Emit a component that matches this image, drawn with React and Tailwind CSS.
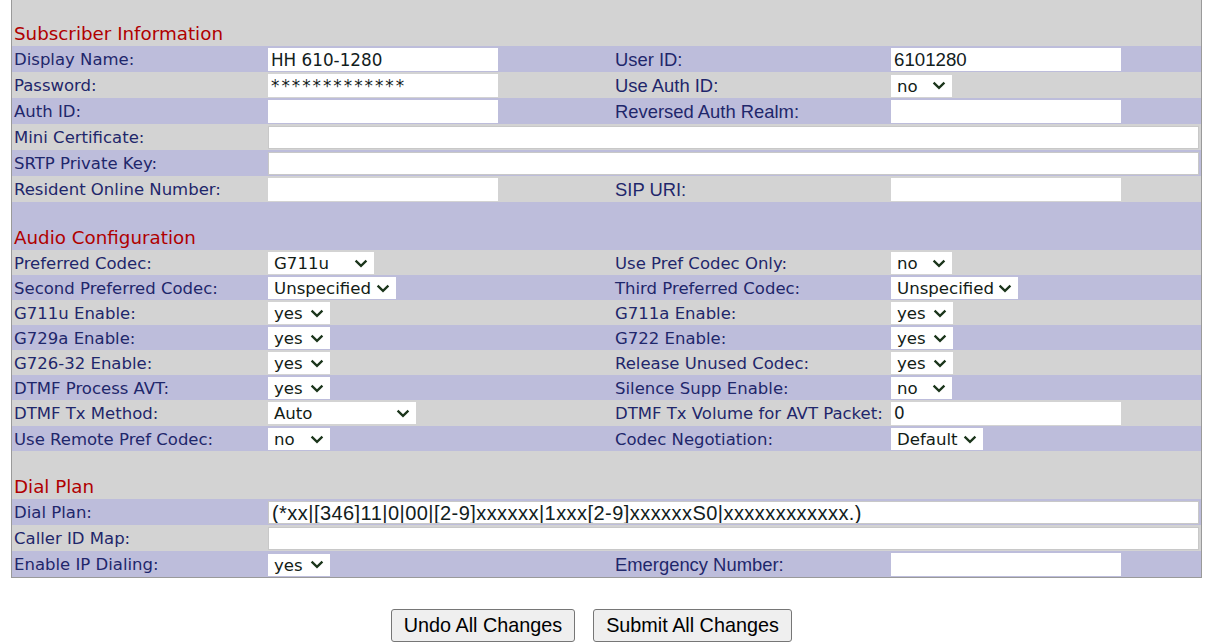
import React from 'react';

const GRAY = 'bg-[#d3d3d3]';
const LAV = 'bg-[#bdbddb]';

const Chevron = () => (
    <svg width="14" height="9" viewBox="0 0 14 9" className="shrink-0">
        <polyline points="1.6,1.6 7,6.8 12.4,1.6" fill="none" stroke="#1b351b" strokeWidth="2.3" />
    </svg>
);

const Select = ({ value, w }) => (
    <div
        className="h-[22px] bg-white flex items-center justify-between pl-[6px] pr-[6px] text-[16.6px] text-[#121c16]"
        style={{ width: w }}
    >
        <span className="leading-none pt-[2px]">{value}</span>
        <Chevron />
    </div>
);

const Input = ({ value = '', arial, full, size, extra = '' }) => (
    <div
        className={
            'h-[23px] bg-white flex items-center pl-[3px] pt-[1px] text-[#12201c] whitespace-nowrap overflow-hidden ' +
            (full ? 'w-[931px] border border-[#c8c8c8] ' : 'w-[230px] ') +
            extra +
            (arial ? " font-['Liberation_Sans'] " : ' ') +
            (size || (arial ? 'text-[18.7px]' : 'text-[16.8px]'))
        }
    >
        {value}
    </div>
);

const Label = ({ children, arial, right }) => (
    <div
        className={
            'whitespace-nowrap text-[#1f276b] ' +
            (right ? 'pl-[3px] ' : 'pl-[2px] ') +
            (arial ? "font-['Liberation_Sans'] text-[18.4px] pt-[0px]" : 'text-[16.5px] pt-[2px]')
        }
    >
        {children}
    </div>
);

const Row = ({ bg, h = 'h-[26px]', children }) => (
    <div className={`grid grid-cols-[256px_344px_279px_1fr] items-center ${h} ${bg}`}>{children}</div>
);

const Header = ({ bg, title }) => (
    <>
        <div className={`h-[23px] ${bg}`}></div>
        <div className={`h-[25px] flex items-center ${bg}`}>
            <span className="pl-[2px] text-[18.3px] text-[#b00000]">{title}</span>
        </div>
    </>
);

const audioRows = [
    ['Preferred Codec:', ['G711u', 106], 'Use Pref Codec Only:', ['no', 61]],
    ['Second Preferred Codec:', ['Unspecified', 128], 'Third Preferred Codec:', ['Unspecified', 127]],
    ['G711u Enable:', ['yes', 62], 'G711a Enable:', ['yes', 62]],
    ['G729a Enable:', ['yes', 62], 'G722 Enable:', ['yes', 62]],
    ['G726-32 Enable:', ['yes', 62], 'Release Unused Codec:', ['yes', 62]],
    ['DTMF Process AVT:', ['yes', 62], 'Silence Supp Enable:', ['no', 61]],
];

export default function App() {
    return (
        <div className="min-h-screen bg-white font-['DejaVu_Sans',sans-serif]">
            <div className="ml-[11px] w-[1191px] border-x border-b border-[#9a9a9a]">
                {/* Subscriber Information */}
                <div className={`h-[21px] ${GRAY}`}></div>
                <div className={`h-[25px] flex items-center ${GRAY}`}>
                    <span className="pl-[2px] text-[18.3px] text-[#b00000]">Subscriber Information</span>
                </div>
                <Row bg={LAV}>
                    <Label>Display Name:</Label>
                    <Input value="HH 610-1280" />
                    <Label right arial>User ID:</Label>
                    <Input value="6101280" arial />
                </Row>
                <Row bg={GRAY}>
                    <Label>Password:</Label>
                    <Input value="*************" extra="tracking-[2px]" />
                    <Label right arial>Use Auth ID:</Label>
                    <Select value="no" w={61} />
                </Row>
                <Row bg={LAV}>
                    <Label>Auth ID:</Label>
                    <Input />
                    <Label right arial>Reversed Auth Realm:</Label>
                    <Input />
                </Row>
                <Row bg={GRAY}>
                    <Label>Mini Certificate:</Label>
                    <div className="col-span-3">
                        <Input full />
                    </div>
                </Row>
                <Row bg={LAV}>
                    <Label>SRTP Private Key:</Label>
                    <div className="col-span-3">
                        <Input full />
                    </div>
                </Row>
                <Row bg={GRAY}>
                    <Label>Resident Online Number:</Label>
                    <Input />
                    <Label right arial>SIP URI:</Label>
                    <Input />
                </Row>

                {/* Audio Configuration */}
                <Header bg={LAV} title="Audio Configuration" />
                {audioRows.map((r, i) => (
                    <Row key={r[0]} bg={i % 2 === 0 ? GRAY : LAV} h="h-[25px]">
                        <Label>{r[0]}</Label>
                        <Select value={r[1][0]} w={r[1][1]} />
                        <Label right>{r[2]}</Label>
                        <Select value={r[3][0]} w={r[3][1]} />
                    </Row>
                ))}
                <Row bg={GRAY}>
                    <Label>DTMF Tx Method:</Label>
                    <Select value="Auto" w={148} />
                    <Label right>DTMF Tx Volume for AVT Packet:</Label>
                    <Input value="0" />
                </Row>
                <Row bg={LAV} h="h-[25px]">
                    <Label>Use Remote Pref Codec:</Label>
                    <Select value="no" w={62} />
                    <Label right>Codec Negotiation:</Label>
                    <Select value="Default" w={92} />
                </Row>

                {/* Dial Plan */}
                <Header bg={GRAY} title="Dial Plan" />
                <Row bg={LAV}>
                    <Label>Dial Plan:</Label>
                    <div className="col-span-3">
                        <Input
                            full
                            arial
                            size="text-[20px]"
                            extra="tracking-[0.45px]"
                            value="(*xx|[346]11|0|00|[2-9]xxxxxx|1xxx[2-9]xxxxxxS0|xxxxxxxxxxxx.)"
                        />
                    </div>
                </Row>
                <Row bg={GRAY}>
                    <Label>Caller ID Map:</Label>
                    <div className="col-span-3">
                        <Input full />
                    </div>
                </Row>
                <Row bg={LAV}>
                    <Label>Enable IP Dialing:</Label>
                    <Select value="yes" w={62} />
                    <Label right arial>Emergency Number:</Label>
                    <Input />
                </Row>
            </div>

            <div className="flex gap-[18px] ml-[391px] mt-[31px] font-['Liberation_Sans',sans-serif]">
                <button className="h-[33px] w-[184px] bg-[#efefef] border border-[#767676] rounded-[3px] text-[19.8px] text-black">
                    Undo All Changes
                </button>
                <button className="h-[33px] w-[199px] bg-[#efefef] border border-[#767676] rounded-[3px] text-[19.8px] text-black">
                    Submit All Changes
                </button>
            </div>
        </div>
    );
}
